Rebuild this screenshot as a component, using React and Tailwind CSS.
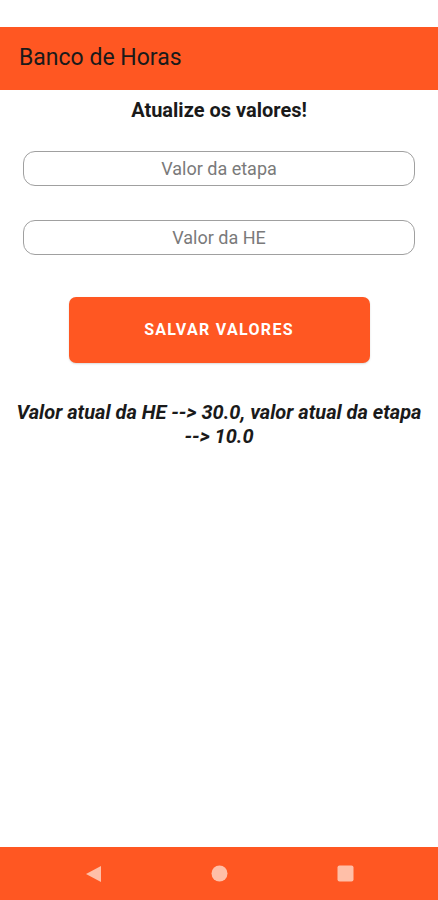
export default function App() {
  return (
    <div className="w-[438px] h-[900px] bg-white flex flex-col font-['Roboto',sans-serif]">
      {/* status bar */}
      <div className="h-[27px] bg-white" />

      {/* app bar */}
      <div className="h-[63px] bg-[#ff5722] flex items-center px-[19px]">
        <span className="text-[23px] text-[#1a1a1a]">Banco de Horas</span>
      </div>

      {/* conteúdo */}
      <div className="flex-1 flex flex-col items-center">
        <h1 className="mt-[8px] text-[20px] font-bold text-[#1a1a1a] leading-[24px]">Atualize os valores!</h1>

        <input
          className="mt-[29px] w-[392px] h-[35px] rounded-[12px] border border-[#a0a0a0] text-center text-[18px] placeholder-[#7a7a7a] outline-none"
          placeholder="Valor da etapa"
        />
        <input
          className="mt-[34px] w-[392px] h-[35px] rounded-[12px] border border-[#a0a0a0] text-center text-[18px] placeholder-[#7a7a7a] outline-none"
          placeholder="Valor da HE"
        />

        <button className="mt-[42px] w-[301px] h-[66px] rounded-[7px] bg-[#ff5722] text-white text-[16px] font-bold tracking-[1.3px] shadow-[0_1px_2px_rgba(0,0,0,0.15)]">
          SALVAR VALORES
        </button>

        <p className="mt-[37px] px-[8px] text-center text-[20px] leading-[24px] font-bold italic text-[#1a1a1a]">
          Valor atual da HE <span className="whitespace-nowrap">--&gt;</span> 30.0, valor atual da etapa{' '}
          <span className="whitespace-nowrap">--&gt; 10.0</span>
        </p>
      </div>

      {/* navegação do sistema */}
      <div className="h-[53px] bg-[#ff5722] flex items-center justify-center gap-[109px]">
        <svg width="17" height="18" viewBox="0 0 17 18">
          <polygon points="16,1 16,17 1,9" fill="#ffbfa8" />
        </svg>
        <svg width="17" height="17" viewBox="0 0 17 17">
          <circle cx="8.5" cy="8.5" r="8" fill="#ffbfa8" />
        </svg>
        <svg width="17" height="17" viewBox="0 0 17 17">
          <rect x="0.5" y="0.5" width="16" height="16" rx="2" fill="#ffbfa8" />
        </svg>
      </div>
    </div>
  );
}
